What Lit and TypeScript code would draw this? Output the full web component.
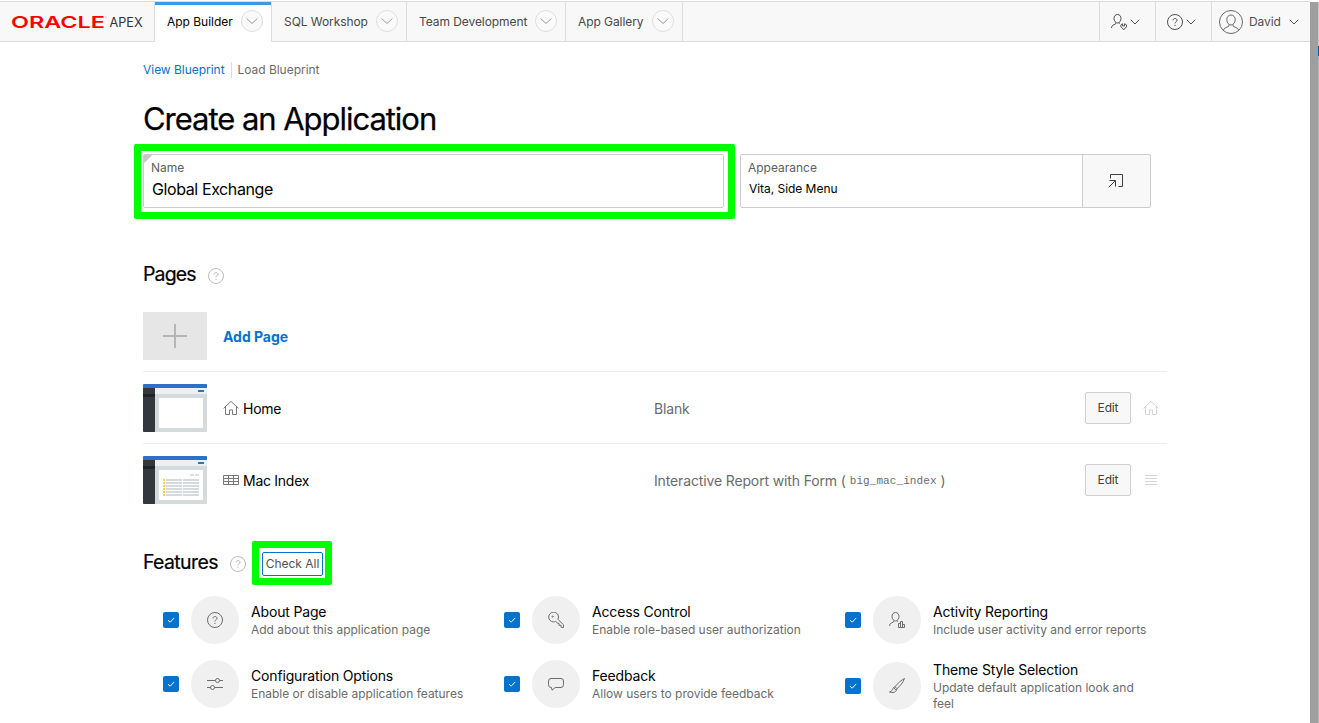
import { LitElement, html, svg, css, nothing, TemplateResult } from "lit";
import { customElement, property } from "lit/decorators.js";

const glyphs: Record<string, TemplateResult> = {
  help: svg`<circle cx="8" cy="8" r="7.5"/><path d="M6 6.4c0-1.2.9-1.9 2-1.9s2 .7 2 1.8c0 1.5-2 1.5-2 3.1"/><path d="M8 10.8v1.2"/>`,
  home: svg`<path d="M.6 8.3 8 1.4l7.4 6.9M2.5 6.8v7.7h4V9.9h3v4.6h4V6.8"/>`,
  table: svg`<path d="M.5 3.5h15v9H.5zM.5 6.5h15M.5 9.5h15M5.5 3.5v9M10.5 3.5v9"/>`,
  bars: svg`<path d="M2 3.5h12M2 6.5h12M2 9.5h12M2 12.5h12"/>`,
  sliders: svg`<path d="M0 4.5h8.5M12.5 4.5H16M0 11.5h3.5M7.5 11.5H16"/><circle cx="10.5" cy="4.5" r="2"/><circle cx="5.5" cy="11.5" r="2"/>`,
  key: svg`<path d="M9.8 7.2c.5-.7.7-1.4.7-2.2a4.9 4.9 0 1 0-5 4.9c.8 0 1.5-.2 2.1-.5l2.2 1.900h1.200v2h2.100v2.100l.3.200h2.100v-2.800z"/><circle cx="4.700" cy="4.600" r=".6"/>`,
  chat: svg`<path d="M3 2.500h10Q15.500 2.500 15.500 5v3.500Q15.500 11.500 13 11.500H7.200L4 14.200 3.500 11.500H3Q.5 11.500.5 8.500V5Q.5 2.500 3 2.500z"/>`,
  userChart: svg`<path d="M6.500.5c2.200 0 3.500 1.700 3.500 4S8.500 9 6.500 9 3 6.800 3 4.500s1.300-4 3.500-4zM4.700 8.800v1L2 11.200Q.5 12 .5 14M8.300 8.800v1"/><path d="M9.500 11.500h2v4h-2zM11.500 9.500h2v6h-2zM13.500 12.500h2v3h-2z"/>`,
  userWrench: svg`<path d="M6.500.5c2.200 0 3.500 1.700 3.500 4S8.500 9 6.500 9 3 6.800 3 4.500s1.300-4 3.500-4zM4.700 8.800v1L2 11.200Q.5 12 .5 14M8.300 8.800v1"/><path d="M11.600 9.800Q9.600 10.300 9.700 12q.1 1.500 1.600 1.900l1 1.600h.9l1-1.600q1.600-.5 1.500-2-.1-1.600-2.100-2.100v2.100h-2z"/>`,
  brush: svg`<path d="M15.500.5c-3 1.400-6.800 4.700-9.500 8.300l1.900 1.900C11.300 8 14.100 4.300 15.500.5zM6 8.800c-.8 0-1.600.8-2 1.800-.5 1.400-1 2.600-3.500 3.400 2.500.8 4.700.7 6-.5.9-.8 1.300-1.900 1.400-2.800M4.600 9.500l2.400 2.700"/>`,
  popup: svg`<path d="M2.500 5.500v-4h12v12h-4M.7 14.300l6.800-6.800M1.500 7.500h6v6"/>`,
  chevron: svg`<path d="m3.700 5.700 4.300 4.300 4.300-4.300"/>`,
  chevronWide: svg`<path d="m2.600 5.500 5.400 5 5.400-5"/>`,
  check: svg`<path d="m5 8.200 2.200 2 4-4.300"/>`,
};

const icon = (name: string, cls = "") =>
  html`<svg class="icon ${cls}" viewBox="0 0 16 16" width="16" height="16">${glyphs[name]}</svg>`;

const tabs = [
  { label: "App Builder", cls: "builder" },
  { label: "SQL Workshop", cls: "sql" },
  { label: "Team Development", cls: "team" },
  { label: "App Gallery", cls: "gallery" },
];

const features = [
  { icon: "help", title: "About Page", text: "Add about this application page" },
  { icon: "key", title: "Access Control", text: "Enable role-based user authorization" },
  { icon: "userChart", title: "Activity Reporting", text: "Include user activity and error reports" },
  { icon: "sliders", title: "Configuration Options", text: "Enable or disable application features" },
  { icon: "chat", title: "Feedback", text: "Allow users to provide feedback" },
  { icon: "brush", title: "Theme Style Selection", text: "Update default application look and feel" },
];

@customElement("page-thumb")
class PageThumb extends LitElement {
  @property({ type: Boolean }) report = false;

  static styles = css`
    :host { display: block; width: 64px; height: 48px; }
    svg { display: block; border-radius: 1px; }
  `;

  render() {
    return html`<svg width="64" height="48" viewBox="0 0 64 48" shape-rendering="crispEdges">
      <rect width="64" height="48" fill="#d5dadd"/>
      <rect x="12" y="4" width="52" height="6" fill="#edf0f0"/>
      <rect y="4" width="12" height="44" fill="#32383d"/>
      <rect y="10" width="12" height="3" fill="#1f2427"/>
      <rect width="64" height="4" fill="#2f6fca"/>
      <rect x="55" y="6" width="6" height="2" fill="#2f6fca"/>
      <rect x="16" y="14" width="44" height="30" fill="#fff"/>
      ${this.report
        ? svg`<path d="M47 18h4v2h-4zM52 18h4v2h-4z" fill="#dcdfe1"/>
          ${[23, 26, 29, 32, 35, 38].map(
            (y) => svg`<rect x="20" y=${y} width="2" height="2" fill="#fbce4a"/>
            <rect x="23" y=${y} width="16" height="2" fill="#d5dadd"/>
            <rect x="40" y=${y} width="16" height="2" fill="#d5dadd"/>`
          )}`
        : nothing}
    </svg>`;
  }
}

@customElement("app-root")
class AppRoot extends LitElement {
  static styles = css`
    :host {
      display: flex; position: relative; width: 1319px; height: 723px; overflow: hidden;
      background: #fff; color: #000; font-family: Inter, "Noto Sans", sans-serif; font-size: 12px;
      line-height: 16px; letter-spacing: -0.015px;
    }
    * { box-sizing: border-box; }
    .icon { display: block; flex: none; fill: none; stroke: currentColor; stroke-width: 1; }
    .page { width: 1310px; flex: none; padding-top: 1px; }
    .edge { flex: 1; display: flex; margin-top: 2px; background: #9f9f9f; justify-content: flex-end; }
    .edge i { width: 1px; background: linear-gradient(#c9c9c9 44px, #0b5c9c 44px, #0b5c9c 54px, #8fb4d4 54px, #8fb4d4 58px, #b5b5b5 58px); }

    header { display: flex; height: 41px; background: #f8f8f8; border: solid #dcdcdc; border-width: 1px 0; }
    .logo { width: 154px; padding: 12px 0 0 10px; display: flex; }
    .logo svg { display: block; overflow: visible; }
    .tab {
      display: flex; align-items: center; justify-content: space-between; height: 39px;
      padding: 0 8px 0 12px; border-right: 1px solid #dcdcdc; color: #484848; letter-spacing: -0.07px;
      white-space: nowrap;
    }
    .tab span:first-child { position: relative; top: 0.5px; }
    .builder { width: 118px; height: 40px; padding-bottom: 1px; border-left: 1px solid #dcdcdc; background: #fff; color: #000; box-shadow: inset 0 3px #3b99e8; letter-spacing: -0.02px; }
    .sql { width: 135px; }
    .team { width: 159px; }
    .gallery { width: 117px; }
    .round { display: flex; align-items: center; justify-content: center; width: 22px; height: 22px; margin-top: -1px; border: 1px solid #dedede; border-radius: 50%; color: #9c9c9c; background: #fafafa; }
    .tools { display: flex; margin-left: auto; color: #505050; }
    .tool { display: flex; align-items: center; width: 56px; padding: 0 0 0 11px; border-left: 1px solid #dcdcdc; }
    .tool.user { width: 99px; padding-left: 7px; }
    .user .name { margin-left: 6px; width: 37px; letter-spacing: -0.1px; }
    .avatar { display: block; stroke: #686868; fill: none; }

    main { margin-left: 143px; width: 1024px; }
    .crumbs { display: flex; height: 16px; margin-top: 20px; white-space: nowrap; color: #6b6b6b; letter-spacing: -0.03px; }
    .crumbs a { width: 89px; color: #0572ce; border-right: 1px solid #dcdcdc; margin-right: 5.500px; }
    h1 { margin: 21px 0 0; font-size: 31px; line-height: 40px; font-weight: 400; letter-spacing: -1.04px; white-space: nowrap; -webkit-text-stroke: 0.25px #000; }
    .fields { display: flex; height: 54px; margin-top: 15px; }
    .field { position: relative; border: 1px solid #ccc; border-radius: 2px; padding: 5px 7px; }
    .field label { display: block; color: #5e5e5e; line-height: 16px; }
    .field.name { width: 581px; margin-right: 16px; background: linear-gradient(135deg, #c8c8c8 5.500px, transparent 6px) no-repeat; }
    .field.name p { margin: 3px 0 0 1px; font-size: 16px; line-height: 20px; letter-spacing: -0.4px; }
    .field.look { width: 343px; border-radius: 2px 0 0 2px; }
    .field.look p { margin: 5px 0 0; line-height: 16px; padding-left: 1px; letter-spacing: -0.04px; }
    .pick { width: 69px; margin-left: -1px; padding-right: 1px; display: flex; align-items: center; justify-content: center; background: #f8f8f8; border: 1px solid #ccc; border-radius: 0 2px 2px 0; color: #404040; }
    .mark { position: absolute; border: 7px solid #0f0; border-radius: 2px; }
    .field .mark { inset: -11px -12px -12px -10px; }

    .head { display: flex; align-items: center; height: 24px; color: #b9b9b9; }
    .pages { margin-top: 54px; }
    h2 { margin: 0; color: #000; font-size: 19.5px; line-height: 24px; font-weight: 400; letter-spacing: -0.63px; -webkit-text-stroke: 0.2px #000; }
    .pages h2 { width: 53px; letter-spacing: -0.85px; }
    .feats h2 { width: 75px; }
    .head .icon { margin: 3px 0 0 12px; }
    .rows { margin-top: 14px; }
    .row { display: grid; grid-template-columns: 80px 431px 431px 1fr; align-items: center; height: 72px; border-bottom: 1px solid #ececec; font-size: 14px; letter-spacing: -0.15px; }
    .row:last-child { border: 0; padding-bottom: 1px; }
    .add { display: flex; align-items: center; justify-content: center; width: 64px; height: 48px; border-radius: 1px; background: #e6e6e6; }
    .link { color: #0572ce; font-weight: 700; padding-top: 2px; letter-spacing: -0.03px; }
    .title { display: flex; align-items: center; gap: 4px; padding-top: 2px; letter-spacing: -0.27px; }
    .title .icon { color: #777; margin-top: -2px; }
    .kind { display: flex; align-items: center; color: #6b6b6b; padding-top: 2px; white-space: pre; letter-spacing: -0.14px; }
    .kind code { font: 11px/14px "Liberation Mono", monospace; letter-spacing: 0.08px; padding: 0 4px; }
    .acts { display: flex; align-items: center; gap: 12px; color: #d4d4d4; }
    .btn { width: 46px; height: 32px; border: 1px solid #d0d0d0; border-radius: 2px; background: #f8f8f8; color: #404040; font-size: 12px; line-height: 30px; text-align: center; }
    .feats { margin-top: 34px; }
    .all { position: relative; width: 61px; height: 24px; margin: 3px 0 0 16px; border: 1px solid #0572ce; border-radius: 2px; color: #505050; line-height: 22px; text-align: center; white-space: nowrap; }
    .all .mark { inset: -12px -10px -10px -11px; }
    .grid { display: grid; grid-template-columns: repeat(3, 341px); align-items: start; margin: 14px 0 0 20px; }
    .feat { display: flex; align-items: center; gap: 12px; padding: 8px 0; }
    .box { display: block; width: 16px; height: 16px; border-radius: 2px; background: #0572ce; color: #fff; }
    .disc { display: flex; align-items: center; justify-content: center; width: 48px; height: 48px; border-radius: 50%; background: #f0f0f0; color: #6c6c6c; }
    .info { width: 219px; }
    .info b { display: block; font-size: 14px; font-weight: 400; line-height: 20px; letter-spacing: -0.16px; }
    .info span { display: block; color: #6b6b6b; line-height: 16px; }
  `;

  render() {
    return html`
      <div class="page">
        <header>
          <div class="logo">
            <svg width="144" height="16" viewBox="0 0 144 16" font-family="Inter, sans-serif" letter-spacing="0">
              <text x="1" y="14" font-size="16.5" font-weight="600" fill="#f00" textLength="94" lengthAdjust="spacingAndGlyphs">ORACLE</text>
              <circle cx="96" cy="3" r=".6" fill="#f66"/>
              <text x="99.500" y="13" font-size="12.500" fill="#333" textLength="33" lengthAdjust="spacingAndGlyphs">APEX</text>
            </svg>
          </div>
          ${tabs.map((t) => html`<div class="tab ${t.cls}"><span>${t.label}</span><span class="round">${icon("chevronWide")}</span></div>`)}
          <div class="tools">
            <div class="tool">${icon("userWrench")}${icon("chevron")}</div>
            <div class="tool">${icon("help")}${icon("chevron")}</div>
            <div class="tool user">
              <svg class="avatar" width="24" height="24" viewBox="0 0 24 24">
                <circle cx="12" cy="12" r="11.500"/>
                <path d="M12 5c2.600 0 4.200 2 4.200 4.700S14.500 15 12 15s-4.200-2.600-4.200-5.300S9.400 5 12 5zM9.900 14.700v1.500l-4 1.900q-1 .5-1.400 1.900M14.100 14.700v1.500l4 1.900q1 .5 1.400 1.900"/>
              </svg>
              <span class="name">David</span>${icon("chevron")}
            </div>
          </div>
        </header>
        <main>
          <div class="crumbs"><a>View Blueprint</a><span>Load Blueprint</span></div>
          <h1>Create an Application</h1>
          <div class="fields">
            <div class="field name"><label>Name</label><p>Global Exchange</p><div class="mark"></div></div>
            <div class="field look"><label>Appearance</label><p>Vita, Side Menu</p></div>
            <div class="pick">${icon("popup")}</div>
          </div>
          <div class="head pages"><h2>Pages</h2>${icon("help")}</div>
          <div class="rows">
            <div class="row">
              <div class="add"><svg width="24" height="24" viewBox="0 0 24 24"><path d="M11 0h2v11h11v2H13v11h-2V13H0v-2h11z" fill="#b5b5b5"/></svg></div>
              <a class="link">Add Page</a>
            </div>
            <div class="row">
              <page-thumb></page-thumb>
              <div class="title">${icon("home")}<span>Home</span></div>
              <div class="kind">Blank</div>
              <div class="acts"><div class="btn">Edit</div>${icon("home")}</div>
            </div>
            <div class="row">
              <page-thumb report></page-thumb>
              <div class="title">${icon("table")}<span>Mac Index</span></div>
              <div class="kind">Interactive Report with Form (<code>big_mac_index</code>)</div>
              <div class="acts"><div class="btn">Edit</div>${icon("bars")}</div>
            </div>
          </div>
          <div class="head feats"><h2>Features</h2>${icon("help")}<div class="all">Check All<div class="mark"></div></div></div>
          <div class="grid">
            ${features.map((f) => html`<div class="feat">
              <span class="box">${icon("check")}</span>
              <span class="disc">${icon(f.icon)}</span>
              <div class="info"><b>${f.title}</b><span>${f.text}</span></div>
            </div>`)}
          </div>
        </main>
      </div>
      <div class="edge"><i></i></div>
    `;
  }
}
